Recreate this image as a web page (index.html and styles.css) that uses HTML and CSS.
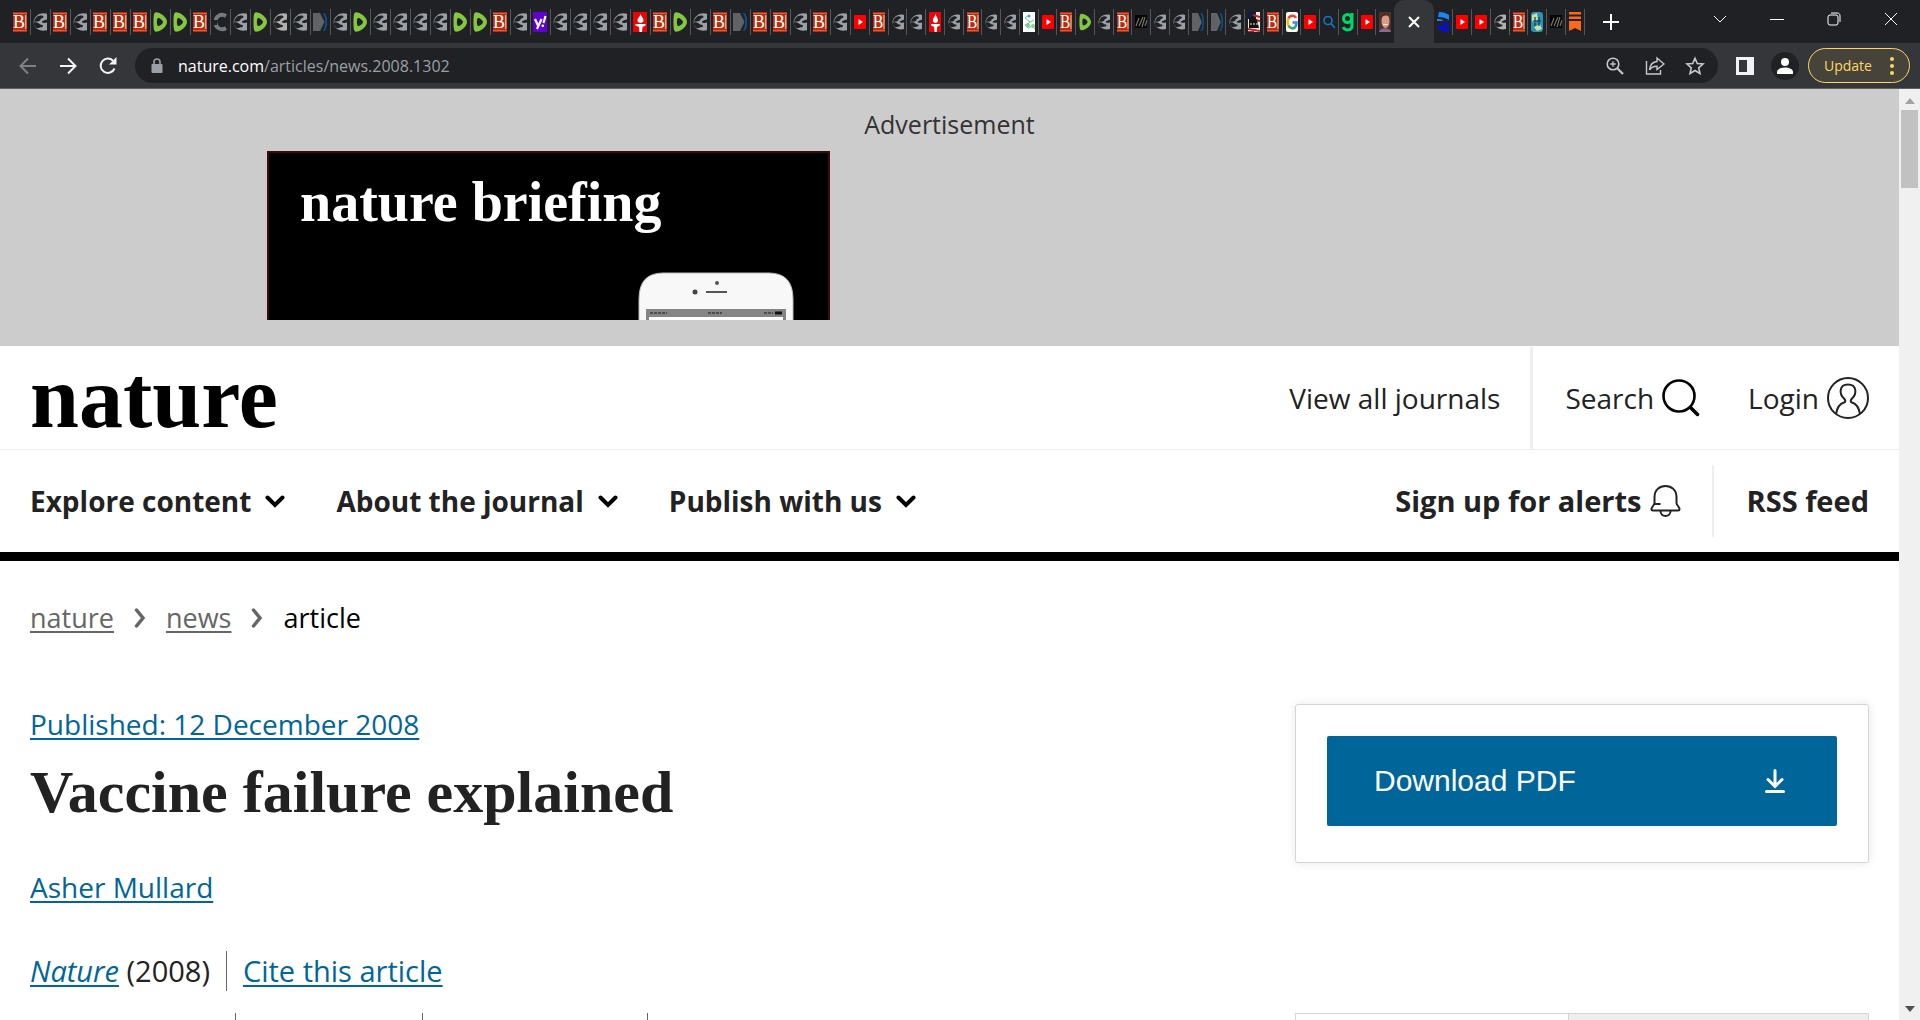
FILE: index.html
```html
<!DOCTYPE html>
<html lang="en">
<head>
<meta charset="utf-8">
<title>Vaccine failure explained | Nature</title>
<link rel="stylesheet" href="styles.css">
</head>
<body>
<svg class="defs" aria-hidden="true">
  <symbol id="b" viewBox="0 0 14 20" preserveAspectRatio="none"><rect width="14" height="20" fill="#bd2b0b"/><path d="M0 1.500h14M0 18.500h14" stroke="#e08a72" stroke-width=".6"/><text x="0" y="16" font-family="Liberation Serif, serif" font-size="18" fill="#fff">B</text><path d="M12.800 3v14" stroke="#fff" stroke-width=".8"/></symbol>
  <symbol id="e" viewBox="0 0 14 20"><path d="M14 1.800C8-.2 1 3.500.5 10c0 6 6 10 13.500 8.200z" fill="#9aa0a6"/><path d="M2.500 6.500C4 4 6 3 9 3.500c2 .5 2 2.300 0 2.700-2 .3-1 2.300-3 2.800-1 .2-2 1-5.500.5zM14 7.500c-2 0-2.500 1-4.500 1.500-1 .5-.5 1.500.5 1.700 1 .3 2.500.3 4-.2zM.5 10.500c2-.5 4.500 0 6 1.500.8 1 3 .5 3.500 1.500s-1.500 2-3 2c-1.500.3-2 1-3.500.5C1.500 14.500.5 12.500.5 10.500z" fill="#202124"/></symbol>
  <symbol id="d" viewBox="0 0 14 20"><path d="M3 .3C7 .3 14 5 14 10s-7 9.700-11 9.700C1 19.700.5 17 .5 10S1 .3 3 .3z" fill="#85c742"/><path d="M5 6c1.500-.5 5 2.500 5 4s-3.500 4.500-5 4-1.500-7.500 0-8z" fill="#202124"/></symbol>
  <symbol id="c" viewBox="0 0 14 20"><path d="M13 4C8 1 2.500 4 2.500 10S8 19 13 16" fill="none" stroke="#77797c" stroke-width="4"/><path d="M0 8h5l-1 5H0z" fill="#202124"/></symbol>
  <symbol id="a" viewBox="0 0 14 20" preserveAspectRatio="none"><path d="M10 1h2c3 6 3 12 0 18h-2c3-6 3-12 0-18z" fill="#0b4f8a"/><path d="M0 1h7l4.500 9L7 19H0z" fill="#616266"/></symbol>
  <symbol id="y" viewBox="0 0 14 20"><rect width="14" height="20" fill="#6001d2"/><path d="M2 7l3 6.500M8.500 7L4 17M12.500 4l-2 7" stroke="#fff" stroke-width="2.200" fill="none"/><circle cx="9.800" cy="13.800" r="1.300" fill="#fff"/></symbol>
  <symbol id="t" viewBox="0 0 14 20" preserveAspectRatio="none"><rect width="14" height="20" fill="#ed0505"/><path d="M7.500 2c1 3 3 4 3 6.500C10.500 10 9 11 7.500 11S4.500 10 4.500 8.500C4.500 6 7 5 7.500 2zM2.500 12h10v1.500l-3 1.500-.5 5H6.500L6 15l-3.500-1.500z" fill="#fff"/></symbol>
  <symbol id="v" viewBox="0 0 12 20"><rect y="3" width="12" height="14" rx="1" fill="#f00"/><path d="M4.500 7l4.500 3-4.500 3z" fill="#fff"/></symbol>
  <symbol id="w" viewBox="0 0 12 20"><rect width="12" height="20" fill="#fff"/><path d="M6 3L2 6l5 4 4-2M7 10l-5 3 3 3 4-2 3 3" fill="none" stroke="#58c2c0"/><circle cx="6" cy="4" r="1.500" fill="#40a8c8"/><circle cx="5" cy="13" r="2" fill="#7ccf7a"/><circle cx="10" cy="14" r="2" fill="#8ed081"/></symbol>
  <symbol id="k" viewBox="0 0 12 20"><rect y="3" width="12" height="13" fill="#050505"/><path d="M1 14L4 6M4 14L8 5M7 15l3-10M10 14l2-6" stroke="#77736c" stroke-width="1.200"/></symbol>
  <symbol id="f" viewBox="0 0 12 20"><rect width="12" height="20" fill="#f2e7dc"/><path d="M0 0h8v7H0z" fill="#111c42"/><path d="M5 3l7 2M4 7l8 2M0 17l12 2M0 20h6" stroke="#bd2430" stroke-width="2"/><path d="M1 7l4-3 4 4 2 8H1z" fill="#14120f"/><path d="M2 12h8" stroke="#eee" stroke-dasharray="2 1"/></symbol>
  <symbol id="g" viewBox="0 0 12 20"><rect width="12" height="20" rx="2" fill="#fff"/><path d="M10 6C8.500 3 4 3 2.500 6.500" fill="none" stroke="#ea4335" stroke-width="2.600"/><path d="M2.500 6.500c-1 2-1 5 0 7" fill="none" stroke="#fbbc05" stroke-width="2.600"/><path d="M2.500 13.500c1.500 3.500 5 3.500 7 1.500" fill="none" stroke="#34a853" stroke-width="2.600"/><path d="M6.500 10.500h4c0 2-.5 3.500-1.500 4.500" fill="none" stroke="#4285f4" stroke-width="2.600"/></symbol>
  <symbol id="s" viewBox="0 0 12 20"><circle cx="5" cy="8.500" r="4" fill="none" stroke="#1a73c8" stroke-width="1.600"/><path d="M8 11.500l4 4.500" stroke="#1a73c8" stroke-width="1.800"/></symbol>
  <symbol id="n" viewBox="0 0 12 20"><circle cx="5.500" cy="6.500" r="4" fill="none" stroke="#00d76b" stroke-width="3"/><path d="M10 1v13c0 5-8 5-8.500 1" fill="none" stroke="#00d76b" stroke-width="3"/></symbol>
  <symbol id="p" viewBox="0 0 12 20"><rect width="12" height="20" fill="#50332d"/><path d="M0 20c1-5 11-5 12 0z" fill="#8b668f"/><ellipse cx="6.500" cy="9" rx="4" ry="7" fill="#d99b87"/><path d="M2 6c1-6 8-6 9-1-3-2-6-2-9 1z" fill="#55291e"/><path d="M4.500 12.500h4" stroke="#fff"/></symbol>
  <symbol id="u" viewBox="0 0 12 20"><path d="M2 0c4 0 7 1 10 3v5C9 6 6 5 1 5zM0 7c3 0 5 0 6 2H0z" fill="#1588f5"/><path d="M5 10l7 1v4l-5-1zM1 13l4 1 7 2v4C8 20 4 19 1 17z" fill="#0a10c8"/></symbol>
  <symbol id="o" viewBox="0 0 12 20"><rect width="12" height="20" rx="3" fill="#2b93b3"/><path d="M1 3l5-2 1 6-3 4-3-2zM3 15l6-3 2 5-5 2z" fill="#c9dfa3"/><path d="M4 5v9M8 5v9M2 9h8" stroke="#123c4c" stroke-width="1.200"/></symbol>
  <symbol id="r" viewBox="0 0 12 20"><path d="M0 0h12v2.500H0zM0 4.500h12V7H0zM0 9h12v10l-6-3-6 3z" fill="#ff6719"/></symbol>
  <symbol id="down" viewBox="0 0 20 13"><path d="M2.500 2.500L10 10l7.500-7.500" fill="none" stroke="#000" stroke-width="4" stroke-linecap="round"/></symbol>
  <symbol id="next" viewBox="0 0 12 20"><path d="M2.500 2L9 10l-6.500 8" fill="none" stroke="#666" stroke-width="3.500" stroke-linecap="round"/></symbol>
</svg>

<header class="browser">
  <div class="strip">
    <div class="tabs tabs-wide">
      <button><svg><use href="#b"/></svg></button><button><svg><use href="#e"/></svg></button><button><svg><use href="#b"/></svg></button><button><svg><use href="#e"/></svg></button><button><svg><use href="#b"/></svg></button><button><svg><use href="#b"/></svg></button>
      <button><svg><use href="#b"/></svg></button><button><svg><use href="#d"/></svg></button><button><svg><use href="#d"/></svg></button><button><svg><use href="#b"/></svg></button><button><svg><use href="#c"/></svg></button><button><svg><use href="#e"/></svg></button>
      <button><svg><use href="#d"/></svg></button><button class="light"><svg><use href="#e"/></svg></button><button><svg><use href="#e"/></svg></button><button><svg><use href="#a"/></svg></button><button><svg><use href="#e"/></svg></button><button><svg><use href="#d"/></svg></button>
      <button><svg><use href="#e"/></svg></button><button><svg><use href="#e"/></svg></button><button><svg><use href="#e"/></svg></button><button><svg><use href="#e"/></svg></button><button><svg><use href="#d"/></svg></button><button><svg><use href="#d"/></svg></button>
      <button><svg><use href="#b"/></svg></button><button><svg><use href="#e"/></svg></button><button><svg><use href="#y"/></svg></button><button><svg><use href="#e"/></svg></button><button><svg><use href="#e"/></svg></button><button><svg><use href="#e"/></svg></button>
      <button><svg><use href="#e"/></svg></button><button><svg><use href="#t"/></svg></button><button><svg><use href="#b"/></svg></button><button><svg><use href="#d"/></svg></button><button><svg><use href="#e"/></svg></button><button><svg><use href="#b"/></svg></button>
      <button><svg><use href="#a"/></svg></button><button><svg><use href="#b"/></svg></button><button><svg><use href="#b"/></svg></button><button><svg><use href="#e"/></svg></button><button><svg><use href="#b"/></svg></button><button><svg><use href="#e"/></svg></button>
    </div>
    <div class="tabs tabs-mid">
      <button><svg><use href="#v"/></svg></button><button><svg><use href="#b"/></svg></button><button><svg><use href="#e"/></svg></button><button><svg><use href="#e"/></svg></button><button><svg><use href="#t"/></svg></button><button><svg><use href="#e"/></svg></button>
      <button><svg><use href="#b"/></svg></button><button><svg><use href="#e"/></svg></button><button><svg><use href="#e"/></svg></button><button><svg><use href="#w"/></svg></button><button><svg><use href="#v"/></svg></button><button><svg><use href="#b"/></svg></button>
      <button><svg><use href="#d"/></svg></button><button><svg><use href="#e"/></svg></button><button><svg><use href="#b"/></svg></button><button><svg><use href="#k"/></svg></button><button><svg><use href="#e"/></svg></button><button><svg><use href="#e"/></svg></button>
      <button><svg><use href="#a"/></svg></button><button><svg><use href="#a"/></svg></button><button><svg><use href="#e"/></svg></button><button><svg><use href="#f"/></svg></button><button><svg><use href="#b"/></svg></button><button><svg><use href="#g"/></svg></button>
      <button><svg><use href="#v"/></svg></button><button><svg><use href="#s"/></svg></button><button><svg><use href="#n"/></svg></button><button><svg><use href="#v"/></svg></button><button><svg><use href="#p"/></svg></button>
    </div>
    <button class="active-tab" aria-label="Close tab"><svg viewBox="0 0 12 12"><path d="M1 1l10 10M11 1L1 11" stroke="#fff" stroke-width="2"/></svg></button>
    <div class="tabs tabs-end">
      <button><svg><use href="#u"/></svg></button><button><svg><use href="#v"/></svg></button><button><svg><use href="#v"/></svg></button><button class="light"><svg><use href="#e"/></svg></button><button><svg><use href="#b"/></svg></button><button><svg><use href="#o"/></svg></button><button><svg><use href="#k"/></svg></button><button><svg><use href="#r"/></svg></button>
    </div>
    <button class="new-tab" aria-label="New tab"><svg viewBox="0 0 16 16"><path d="M8 0v16M0 8h16" stroke="#fff" stroke-width="2"/></svg></button>
    <div class="window-controls">
      <button aria-label="Search tabs"><svg viewBox="0 0 16 16"><path d="M2 5l6 6 6-6" fill="none" stroke="#fff"/></svg></button>
      <button aria-label="Minimise"><svg viewBox="0 0 16 16"><path d="M1 8.500h14" stroke="#fff"/></svg></button>
      <button aria-label="Restore"><svg viewBox="0 0 16 16"><rect x="2" y="4" width="10" height="10" rx="2" fill="none" stroke="#fff"/><path d="M5 2h6c2 0 3 1 3 3v6" fill="none" stroke="#fff"/></svg></button>
      <button aria-label="Close"><svg viewBox="0 0 16 16"><path d="M2 2l12 12M14 2L2 14" stroke="#fff"/></svg></button>
    </div>
  </div>
  <div class="toolbar">
    <button class="nav-button" aria-label="Back"><svg viewBox="0 0 20 20"><path d="M18 10H3M10 2.500L2.500 10l7.500 7.500" fill="none" stroke="#7f8185" stroke-width="2"/></svg></button>
    <button class="nav-button" aria-label="Forward"><svg viewBox="0 0 20 20"><path d="M2 10h15M10 2.500l7.500 7.500-7.500 7.500" fill="none" stroke="#f1f3f4" stroke-width="2"/></svg></button>
    <button class="nav-button reload" aria-label="Reload"><svg viewBox="0 0 20 20"><path d="M16.500 12.500A7.200 7.200 0 1 1 15 4.700" fill="none" stroke="#f1f3f4" stroke-width="2"/><path d="M18.500 1v7.500H11z" fill="#f1f3f4"/></svg></button>
    <div class="address">
      <svg class="lock" viewBox="0 0 12 16"><path d="M3 7V4a3 3 0 0 1 6 0v3" fill="none" stroke="#9aa0a6" stroke-width="1.600"/><rect x=".5" y="6" width="11" height="9" rx="1" fill="#9aa0a6"/></svg>
      <span class="url"><b>nature.com</b>/articles/news.2008.1302</span>
      <div class="address-actions">
      <button aria-label="Zoom"><svg viewBox="0 0 20 20"><circle cx="8" cy="8" r="5.800" fill="none" stroke="#c4c7cb" stroke-width="1.600"/><path d="M12.500 12.500l5.500 5.500" stroke="#c4c7cb" stroke-width="2.200"/><path d="M5.300 8h5.400M8 5.300v5.400" stroke="#c4c7cb" stroke-width="1.300"/></svg></button>
      <button aria-label="Share"><svg viewBox="0 0 20 20"><path d="M1.500 5v13h14v-4" fill="none" stroke="#c4c7cb" stroke-width="1.400"/><path d="M12 2l7 6-7 5.500v-3.300c-4 0-6 1.300-7.500 3.800C5 9 7.500 5.800 12 5.500z" fill="none" stroke="#c4c7cb" stroke-width="1.400"/></svg></button>
      <button aria-label="Bookmark"><svg viewBox="0 0 20 20"><path d="M10 2.200l2.300 5.300 5.700.5-4.300 3.800 1.300 5.700-5-3-5 3 1.300-5.700L2 8l5.700-.5z" fill="none" stroke="#c4c7cb" stroke-width="1.600"/></svg></button>
      </div>
    </div>
    <button class="side-panel" aria-label="Side panel"><svg viewBox="0 0 18 18"><path d="M0 0h18v18H0zM3 3v12h8V3z" fill="#f1f3f4" fill-rule="evenodd"/></svg></button>
    <button class="profile" aria-label="Profile"><svg viewBox="0 0 28 28"><circle cx="14" cy="14" r="14" fill="#202124"/><circle cx="14" cy="10" r="4" fill="#fff"/><path d="M6 22v-2c0-6 16-6 16 0v2z" fill="#fff"/></svg></button>
    <button class="update">Update<svg viewBox="0 0 4 18"><circle cx="2" cy="2" r="2"/><circle cx="2" cy="9" r="2"/><circle cx="2" cy="16" r="2"/></svg></button>
  </div>
</header>

<div class="viewport">
  <main class="page">
    <aside class="ad">
      <p>Advertisement</p>
      <a class="banner" href="#">
        <span>nature briefing</span>
        <svg viewBox="0 0 156 48"><path d="M1 50V27Q1 1 25 1h106q24 0 24 26v23z" fill="#f8f8f8" stroke="#bbb"/><circle cx="57" cy="20" r="2.500" fill="#444"/><circle cx="79" cy="11" r="2" fill="#555"/><path d="M68 20h21" stroke="#555" stroke-width="2"/><path d="M8 37h140v11H8z" fill="#858585"/><path d="M11 45h134v3H11z" fill="#fff"/><path d="M12 41h17M70 41h14M126 41h9" stroke="#4d4d4d" stroke-width="2" stroke-dasharray="3 1"/><path d="M137 41h7" stroke="#111" stroke-width="3"/></svg>
      </a>
    </aside>
    <div class="brand-row">
      <a class="logo" href="#">nature</a>
      <a class="journals" href="#">View all journals</a>
      <div class="account">
        <a href="#">Search<svg class="icon-search" viewBox="0 0 38 38"><circle cx="17" cy="17" r="15.500" fill="none" stroke="#000" stroke-width="2.600"/><path d="M28.500 28.500l7 7" stroke="#000" stroke-width="3.500" stroke-linecap="round"/></svg></a>
        <a href="#">Login<svg class="icon-user" viewBox="0 0 42 42"><g fill="none" stroke="#222" stroke-width="2"><circle cx="21" cy="21" r="20"/><path d="M9 37c1-6 3-10 8-11.500 2-.8 1.500-2.500 0-4C12 17 12 7.500 21 7.500S30 17 25 21.500c-1.500 1.500-2 3.200 0 4 5 1.500 7 5.500 8 11.500"/></g></svg></a>
      </div>
    </div>
    <nav class="menu">
      <a href="#">Explore content<svg class="chevron"><use href="#down"/></svg></a>
      <a href="#">About the journal<svg class="chevron"><use href="#down"/></svg></a>
      <a href="#">Publish with us<svg class="chevron"><use href="#down"/></svg></a>
      <a class="alerts" href="#">Sign up for alerts<svg class="bell" viewBox="0 0 30 32"><g fill="none" stroke="#222" stroke-width="2"><path d="M10 19H4M4 18V12C4 5 9 1 15 1s11 4 11 11v6c0 2 3 4 3 6 0 1-.5 1.500-1.500 1.500h-25C1.500 25.500 1 25 1 24c0-2 3-4 3-6"/><path d="M10 26c0 6.500 10 6.500 10 0"/></g></svg></a>
      <a class="rss" href="#">RSS feed</a>
    </nav>
    <nav class="crumbs"><a href="#">nature</a><svg><use href="#next"/></svg><a href="#">news</a><svg><use href="#next"/></svg><span>article</span></nav>
    <div class="columns">
      <article>
        <a class="published" href="#">Published: 12 December 2008</a>
        <h1>Vaccine failure explained</h1>
        <a class="author" href="#">Asher Mullard</a>
        <div class="cite"><span><a href="#"><i>Nature</i></a> (2008)</span><a class="cite-link" href="#">Cite this article</a></div>
        <div class="metrics"><span></span><span></span><span></span></div>
      </article>
      <aside class="side">
        <div class="card"><button>Download PDF<svg viewBox="0 0 20 24"><path d="M10 1.500v15M3 10.500l7 7 7-7" fill="none" stroke="#fff" stroke-width="3" stroke-linecap="round"/><path d="M1.500 22.500h17" stroke="#fff" stroke-width="3" stroke-linecap="round"/></svg></button></div>
        <div class="panel-tabs"><span></span><span></span></div>
      </aside>
    </div>
  </main>
  <div class="scrollbar"><svg viewBox="0 0 10 6"><path d="M0 6l5-6 5 6z" fill="#a3a3a3"/></svg><i></i><svg class="last" viewBox="0 0 10 6"><path d="M0 0l5 6 5-6z" fill="#505050"/></svg></div>
</div>
</body>
</html>
```
FILE: styles.css
```css
* { box-sizing: border-box; }
body { margin: 0; height: 100vh; overflow: hidden; display: flex; flex-direction: column; background: #fff; color: #222; font: 28px/40px "Open Sans", "Noto Sans", sans-serif; }
button { border: 0; padding: 0; background: none; font: inherit; color: inherit; display: flex; align-items: center; }
svg { display: block; flex: none; }
p, h1 { margin: 0; }
.defs { display: none; }

/* browser frame */
.browser { flex: none; background: #35363a; border-bottom: 1px solid #5f6063; }
.strip { display: flex; height: 43px; background: #202124; padding-left: 11px; }
.tabs { display: flex; align-items: center; height: 43px; }
.tabs button { flex: 1; min-width: 0; height: 26px; border-right: 1px solid #55565a; padding-left: 2px; }
.tabs svg { width: 14px; height: 20px; }
.tabs-wide { flex: none; width: 840px; }
.tabs-mid { flex: none; width: 543px; }
.tabs-end { flex: none; width: 151px; }
.tabs-mid svg, .tabs-end svg { width: 12px; }
.tabs-mid button, .tabs-end button { padding-left: 3px; }
.tabs-mid button:last-child { border: 0; }
.light { filter: saturate(0) brightness(1.1); }
.active-tab { width: 40px; height: 43px; justify-content: center; background: #35363a; border-radius: 10px 10px 0 0; }
.active-tab svg { width: 12px; height: 12px; }
.new-tab { margin-left: 18px; }
.new-tab svg { width: 16px; height: 16px; }
.window-controls { margin-left: auto; margin-right: 21px; display: flex; gap: 41px; align-items: center; height: 38px; }
.window-controls svg { width: 16px; height: 16px; }
.toolbar { display: flex; align-items: center; height: 45px; padding: 0 10px 0 18px; }
.nav-button { margin-right: 20px; }
.reload { margin-right: 17px; }
.nav-button svg { width: 20px; height: 20px; }
.address { flex: 1; display: flex; align-items: center; height: 35px; border-radius: 18px; background: #202124; padding: 0 13px 0 16px; margin-right: 18px; }
.address svg { width: 20px; height: 20px; }
.address .lock { width: 12px; height: 16px; }
.url { margin-left: 15px; font-size: 16px; line-height: 24px; color: #9aa0a6; }
.url b { font-weight: 400; color: #fff; }
.address-actions { margin-left: auto; display: flex; gap: 20px; }
.side-panel svg { width: 18px; height: 18px; }
.profile { margin: 0 9px 0 17px; }
.profile svg { width: 28px; height: 28px; }
.update { height: 35px; width: 102px; padding: 0 15px; justify-content: space-between; border: 1px solid #fdd663; border-radius: 18px; background: #46433a; color: #fdd663; font-size: 14px; }
.update svg { width: 4px; height: 18px; fill: #fdd663; }

/* page and scrollbar */
.viewport { flex: 1; min-height: 0; display: flex; }
.page { flex: 1; min-width: 0; overflow: hidden; }
.page a { color: inherit; text-decoration: none; }
.scrollbar { flex: none; width: 21px; background: #f0f0f0; display: flex; flex-direction: column; align-items: center; padding: 9px 0 8px; }
.scrollbar svg { width: 10px; height: 6px; }
.scrollbar i { width: 17px; height: 78px; margin-top: 6px; background: #c1c1c1; }
.scrollbar .last { margin-top: auto; }

.ad { background: #ccc; height: 257px; padding-top: 15px; }
.ad p { text-align: center; font-size: 25px; line-height: 40px; color: #333; }
.banner { position: relative; display: block; width: 563px; height: 169px; margin: 7px 0 0 267px; background: #000; border: 2px solid #3f080b; border-bottom: 0; padding: 17px 0 0 31px; }
.page .banner { color: #fff; font: bold 56px/64px "Liberation Serif", serif; }
.banner svg { position: absolute; right: 34px; bottom: 0; width: 156px; height: 48px; }

.brand-row { display: flex; align-items: center; height: 104px; padding: 0 30px; border-bottom: 1px solid #eee; }
.page .logo { color: #000; font: bold 88px/100px "Liberation Serif", serif; }
.journals { margin-left: auto; margin-right: 30px; }
.account { display: flex; gap: 48px; align-items: center; height: 102px; padding-left: 32px; border-left: 3px solid #eee; }
.account a { display: flex; align-items: center; gap: 8px; }
.icon-search { width: 38px; height: 38px; }
.icon-user { width: 42px; height: 42px; }
.menu { display: flex; align-items: center; height: 111px; padding: 0 30px; border-bottom: 9px solid #000; font-weight: 700; }
.menu a { display: flex; align-items: center; gap: 14px; margin-right: 51px; }
.chevron { width: 20px; height: 13px; }
.bell { width: 31px; height: 32px; }
.menu .alerts { margin: 0 31px 0 auto; gap: 8px; font-size: 29px; }
.menu .rss { margin: 0; height: 72px; padding-left: 33px; border-left: 2px solid #eee; font-size: 29px; }

.crumbs { display: flex; align-items: center; gap: 20px; padding: 37px 30px 0; font-size: 27px; }
.crumbs svg { width: 12px; height: 20px; }
.crumbs span { color: #000; }
.page .crumbs a { color: #666; }
.page .crumbs a, .page article a { text-decoration: underline; text-decoration-thickness: 2px; text-underline-offset: 3px; }
.columns { display: grid; grid-template-columns: minmax(0, 1fr) 574px; padding: 66px 30px 0; }
article { display: flex; flex-direction: column; align-items: flex-start; }
.page article a { color: #069; }
h1 { margin-top: 13px; font: bold 60px/70px "Liberation Serif", serif; }
.author { margin-top: 40px; }
.cite { display: flex; margin-top: 44px; font-size: 29px; }
.cite-link { margin-left: 16px; padding-left: 16px; border-left: 1px solid #666; }
.metrics { display: flex; margin-top: 22px; height: 40px; }
.metrics span { border-right: 1px solid #666; width: 206px; }
.metrics span:nth-child(2) { width: 187px; }
.metrics span:nth-child(3) { width: 225px; }
.side { display: flex; flex-direction: column; gap: 150px; }
.card { height: 159px; padding: 31px; border: 1px solid #d5d5d5; border-radius: 3px; box-shadow: 0 0 10px rgba(0, 0, 0, .1); }
.card button { width: 100%; height: 90px; padding: 0 52px 0 47px; justify-content: space-between; background: #069; color: #fff; border-radius: 2px; font: 30px/40px "Liberation Sans", Arial, sans-serif; }
.card svg { width: 20px; height: 24px; }
.panel-tabs { display: flex; height: 60px; border: 1px solid #d5d5d5; }
.panel-tabs span { flex: 1; }
.panel-tabs span + span { flex: none; width: 300px; background: #eee; border-left: 1px solid #d5d5d5; }
```
